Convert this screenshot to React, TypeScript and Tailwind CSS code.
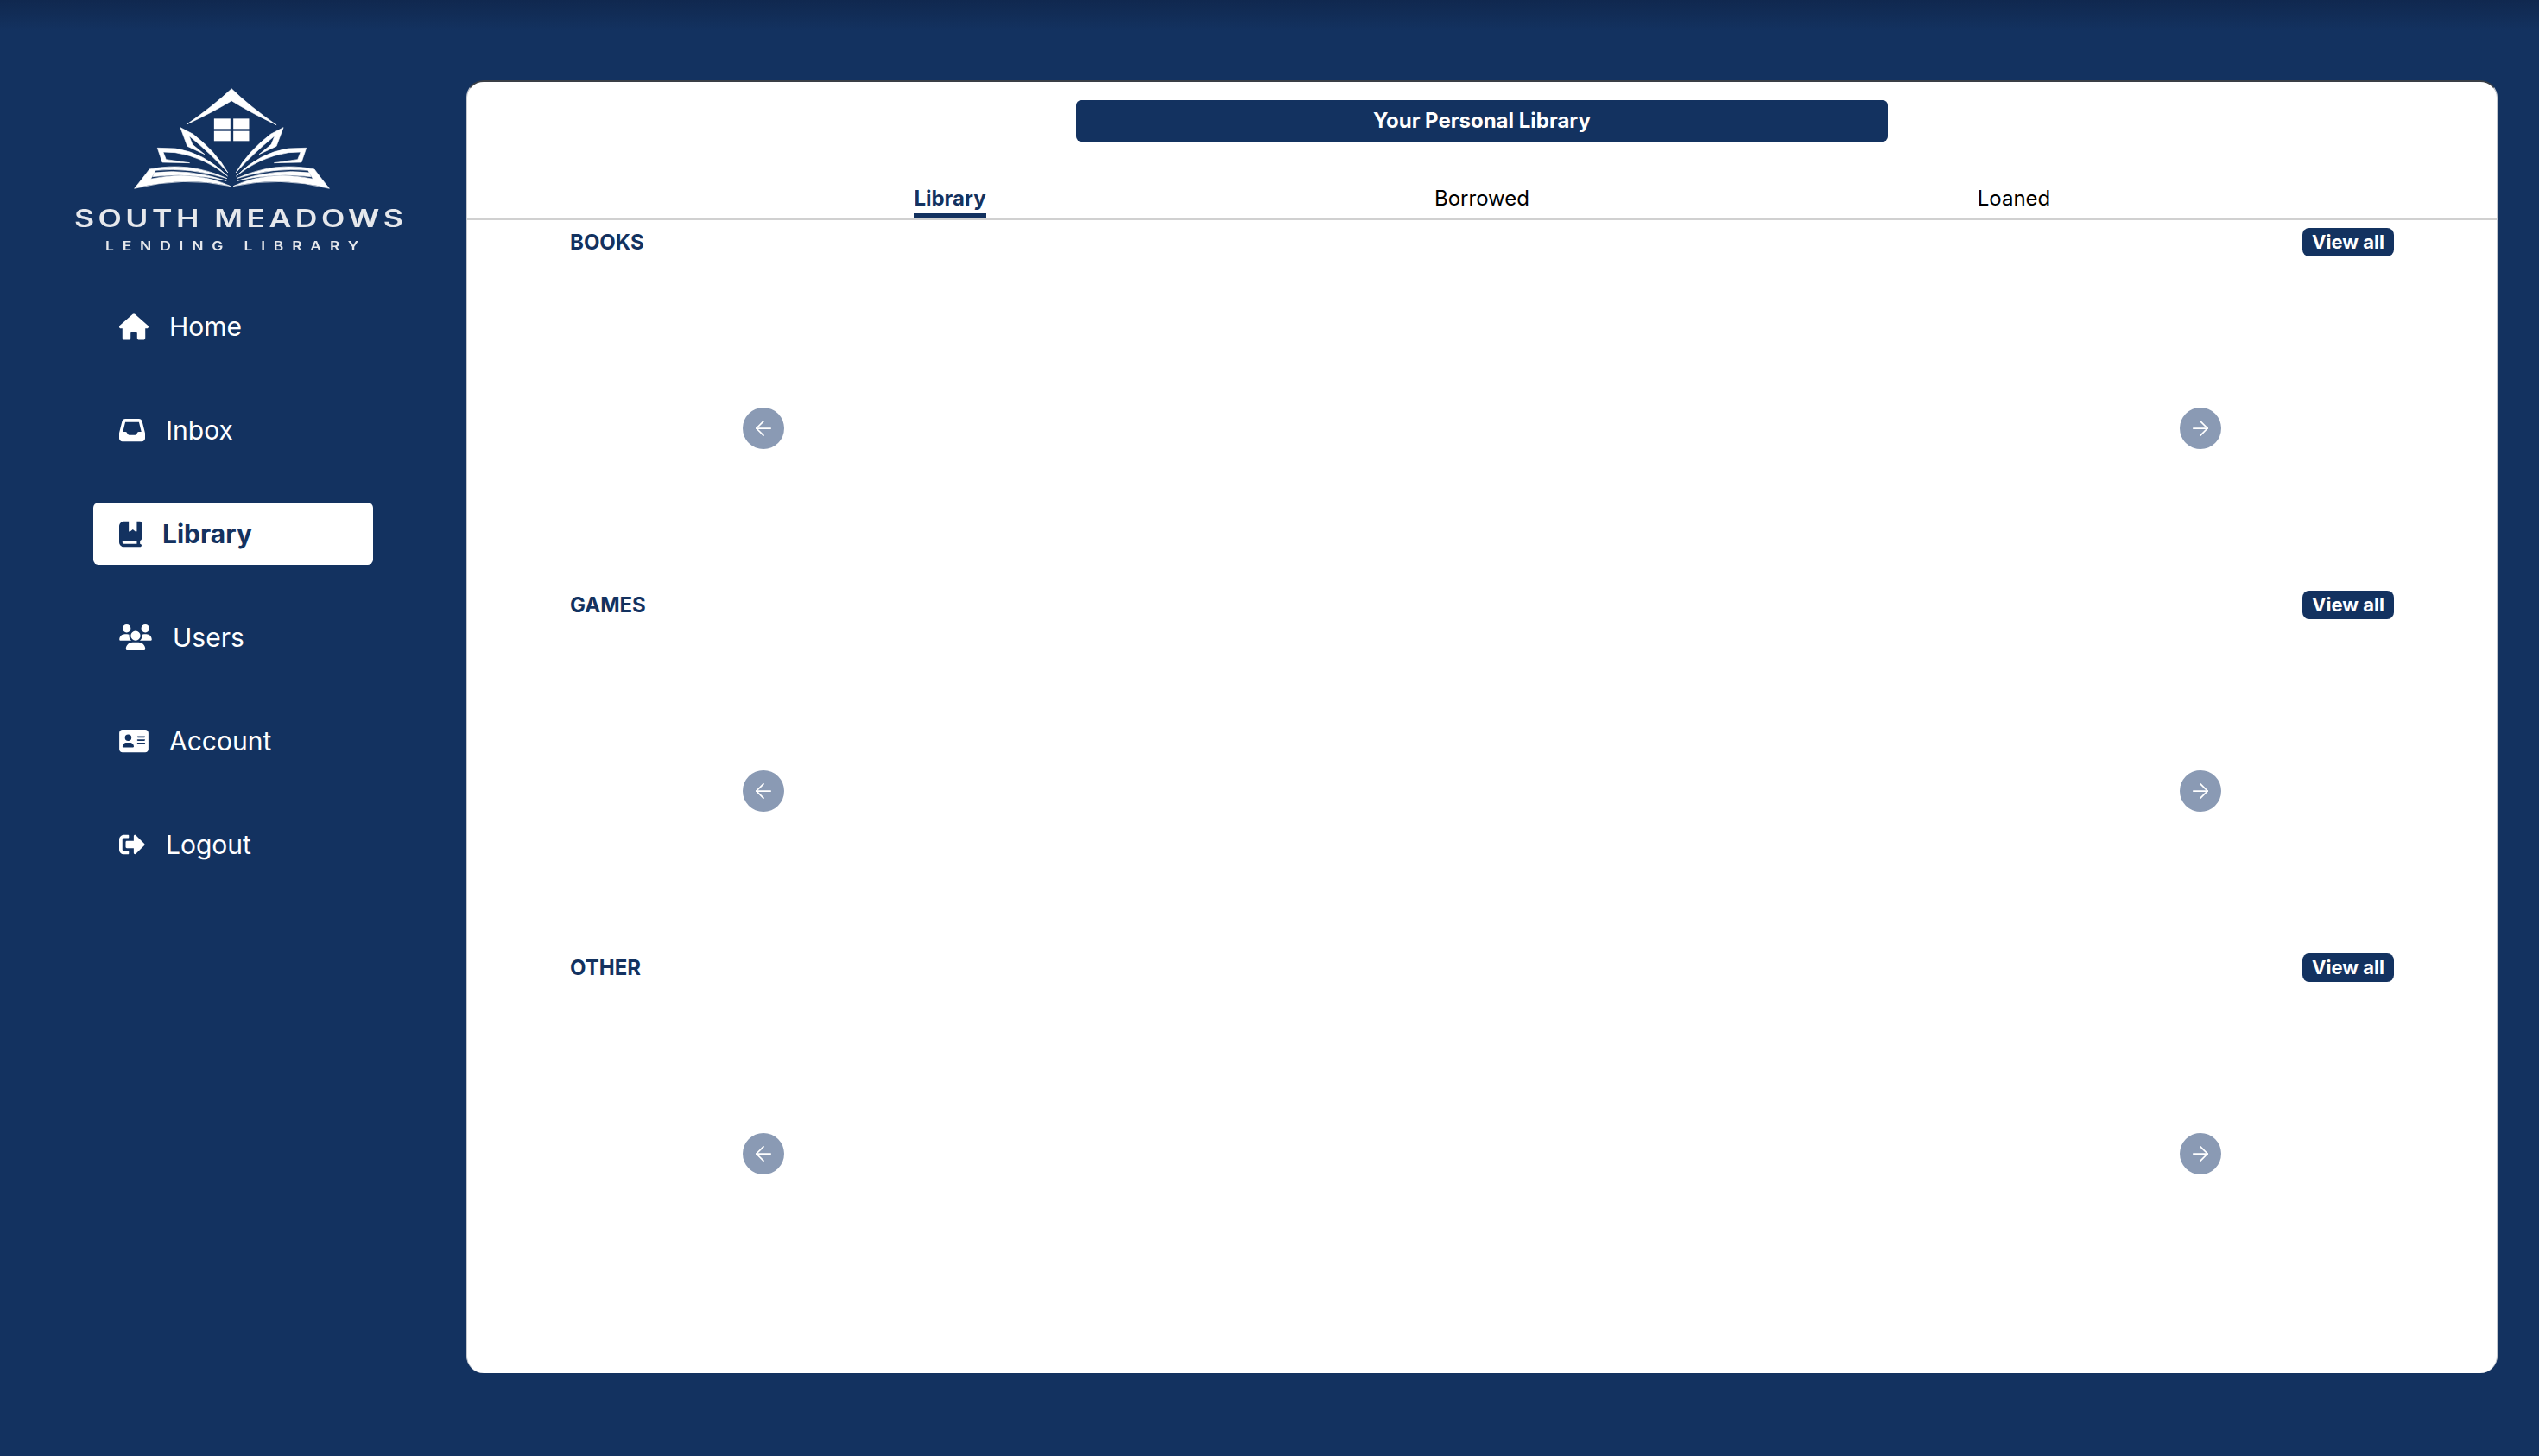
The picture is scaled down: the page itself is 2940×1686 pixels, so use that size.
import type { ReactNode } from "react";
import { ArrowLeft, ArrowRight } from "lucide-react";
import { FaSignOutAlt } from "react-icons/fa";
import {
  FaHouse,
  FaInbox,
  FaBookBookmark,
  FaUsers,
  FaAddressCard,
} from "react-icons/fa6";

const NAV_ITEMS: { label: string; icon: ReactNode; active?: boolean }[] = [
  { label: "Home", icon: <FaHouse className="h-[31px] w-[34px]" /> },
  { label: "Inbox", icon: <FaInbox className="h-[30px] w-[30px]" /> },
  { label: "Library", icon: <FaBookBookmark className="h-[31px] w-[26px]" />, active: true },
  { label: "Users", icon: <FaUsers className="h-[30px] w-[38px]" /> },
  { label: "Account", icon: <FaAddressCard className="h-[30px] w-[34px]" /> },
  { label: "Logout", icon: <FaSignOutAlt className="h-[30px] w-[30px]" /> },
];

function LogoMark() {
  const half = (
    <>
      <path d="M448 203 L492 226 Q570 285 613 360 Q555 295 478 232 L490 262 L532 296 L472 268 Z" />
      <path d="M368 274 L430 276 Q530 290 612 372 Q530 305 430 290 L388 288 L398 314 L480 326 L385 324 Z" />
      <path d="M288 415 Q320 375 340 348 Q480 320 610 380 Q480 340 362 352 L345 382 Q500 350 622 407 Q460 372 288 415 Z" />
      <path d="M358 360 Q480 345 608 388 Q480 358 352 374 Z" />
    </>
  );
  return (
    <svg viewBox="280 60 700 360" width={233} height={120} fill="white" stroke="white" strokeWidth={2} className="block">
      <path d="M626 68 Q690 130 782 194 Q690 150 626 110 Q560 150 470 192 Q560 130 626 68 Z" />
      <rect x="565" y="172" width="57" height="36" stroke="none" />
      <rect x="632" y="172" width="55" height="36" stroke="none" />
      <rect x="565" y="215" width="57" height="35" stroke="none" />
      <rect x="632" y="215" width="55" height="35" stroke="none" />
      {half}
      <g transform="translate(1254 0) scale(-1 1)">{half}</g>
    </svg>
  );
}

function Logo() {
  return (
    <div className="flex flex-col pt-[100px] blur-[0.5px]">
      <div className="ml-[153px]">
        <LogoMark />
      </div>
      <div className="ml-[86px] mt-[20px] h-[26px] origin-left scale-x-[1.27] whitespace-nowrap font-['Inter'] text-[28px] font-semibold leading-[26px] tracking-[0.125em] text-[#e6e8ec]">
        SOUTH MEADOWS
      </div>
      <div className="ml-[122px] mt-[12px] h-[14px] origin-left scale-x-[1.25] whitespace-nowrap font-['Inter'] text-[14px] font-semibold leading-[14px] tracking-[0.56em] text-[#e6e8ec]">
        LENDING LIBRARY
      </div>
    </div>
  );
}

function NavItem({ label, icon, active }: { label: string; icon: ReactNode; active?: boolean }) {
  return (
    <div
      className={
        active
          ? "flex h-[72px] w-[324px] items-center gap-6 rounded-md bg-white pl-[30px] text-[30px] font-bold text-[#133260]"
          : "flex h-[72px] w-[324px] items-center gap-6 rounded-md pl-[30px] text-[30px] text-white"
      }
    >
      {icon}
      <span>{label}</span>
    </div>
  );
}

function Section({ title }: { title: string }) {
  return (
    <section className="h-[420px] px-[119px]">
      <div className="flex h-[33px] items-center justify-between">
        <h2 className="text-2xl font-bold text-[#133260]">{title}</h2>
        <button className="flex h-[33px] w-[106px] items-center justify-center rounded-lg bg-[#133260] text-[22px] font-bold text-white">
          View all
        </button>
      </div>
      <div className="flex items-start justify-between px-[200px] pt-[175px]">
        <button className="flex h-12 w-12 items-center justify-center rounded-full bg-[#8a9ab4] text-white">
          <ArrowLeft size={28} strokeWidth={1.5} />
        </button>
        <button className="flex h-12 w-12 items-center justify-center rounded-full bg-[#8a9ab4] text-white">
          <ArrowRight size={28} strokeWidth={1.5} />
        </button>
      </div>
    </section>
  );
}

export default function App() {
  return (
    <div className="flex h-[1686px] w-[2940px] overflow-hidden bg-[linear-gradient(to_bottom,#10284f_0px,#133260_36px)] font-['Inter',sans-serif]">
      {/* Sidebar */}
      <aside className="w-[540px] shrink-0">
        <Logo />
        <nav className="mt-[50px] flex flex-col gap-12 pl-[108px]">
          {NAV_ITEMS.map((item) => (
            <NavItem key={item.label} {...item} />
          ))}
        </nav>
      </aside>

      {/* Main panel */}
      <main className="mt-[93px] h-[1497px] w-[2352px] overflow-hidden rounded-[20px] border-x border-t-2 border-x-[#c4c8ce] border-t-[#3a3f46] bg-white">
        <div className="mx-auto mt-[21px] flex h-12 w-[940px] items-center justify-center rounded-md bg-[#133260] text-2xl font-bold text-white">
          Your Personal Library
        </div>
        <div className="mt-[41px] border-b-2 border-[#d0d0d0]">
          <div className="mx-auto grid h-[48px] w-[1848px] grid-cols-3 text-center text-2xl text-black">
            <div>
              <span className="inline-block h-[48px] border-b-[6px] border-[#133260] font-bold leading-[49px] text-[#133260]">
                Library
              </span>
            </div>
            <div className="leading-[49px]">Borrowed</div>
            <div className="leading-[49px]">Loaned</div>
          </div>
        </div>
        <div className="pt-[9px]">
          <Section title="BOOKS" />
          <Section title="GAMES" />
          <Section title="OTHER" />
        </div>
      </main>
    </div>
  );
}
